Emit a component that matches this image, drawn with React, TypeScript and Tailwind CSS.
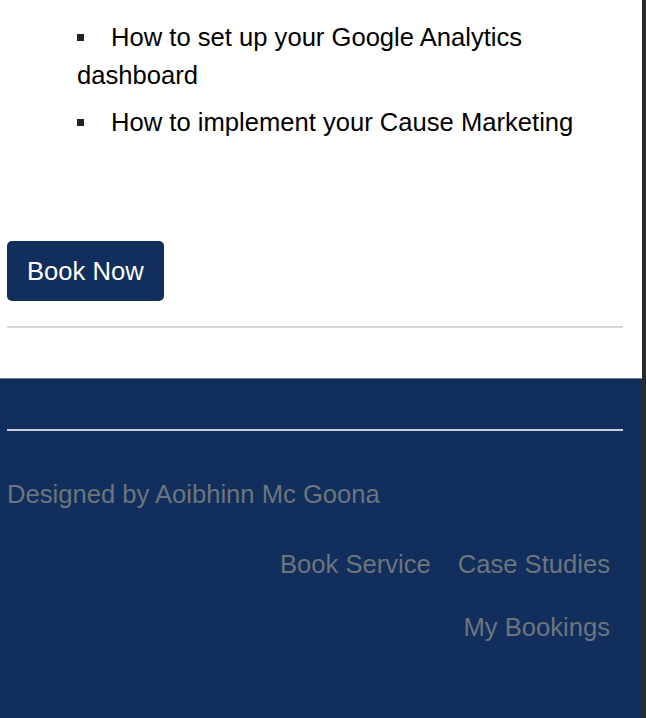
const listItems = [
  "How to set up your Google Analytics dashboard",
  "How to implement your Cause Marketing",
];

const BulletItem = ({ children }: { children: React.ReactNode }) => {
  return (
    <li className="leading-[38px]">
      <span className="inline-block w-[34px] align-middle">
        <span className="block size-[7px] bg-[#222] mb-[4px]" />
      </span>
      {children}
    </li>
  );
};

export default function App() {
  return (
    <div
      className="flex w-[646px] min-h-[718px] bg-white text-[25.6px] text-black"
      style={{ fontFamily: '"Liberation Sans", Arial, sans-serif' }}
    >
      <div className="flex flex-col w-[642px]">
        {/* content */}
        <section className="px-[7px] pt-[18px] pb-[50px]">
          <ul className="pl-[70px] pr-[40px] flex flex-col gap-[9px]">
            {listItems.map((item) => (
              <BulletItem key={item}>{item}</BulletItem>
            ))}
          </ul>

          <button className="mt-[100px] h-[60px] px-[20px] rounded-[5px] bg-[#112e5c] text-white">
            Book Now
          </button>

          <hr className="mt-[25px] w-[616px] border-0 h-[2px] bg-[#d4d4d4]" />
        </section>

        {/* footer */}
        <footer className="flex-1 bg-[#112e5c] border-t border-[#6f7f95] px-[7px] pt-[50px] text-[#6c757d]">
          <hr className="w-[616px] border-0 h-[2px] bg-[#c9d0dc]" />
          <p className="mt-[48px] leading-[30px]">Designed by Aoibhinn Mc Goona</p>
          <nav className="mt-[40px] flex flex-col items-end pr-[25px] gap-[33px]">
            <div className="flex gap-[27px] leading-[30px]">
              <a href="#">Book Service</a>
              <a href="#">Case Studies</a>
            </div>
            <a href="#" className="leading-[30px]">
              My Bookings
            </a>
          </nav>
        </footer>
      </div>
      <div className="w-[4px] bg-[#2b2b2b]" />
    </div>
  );
}
